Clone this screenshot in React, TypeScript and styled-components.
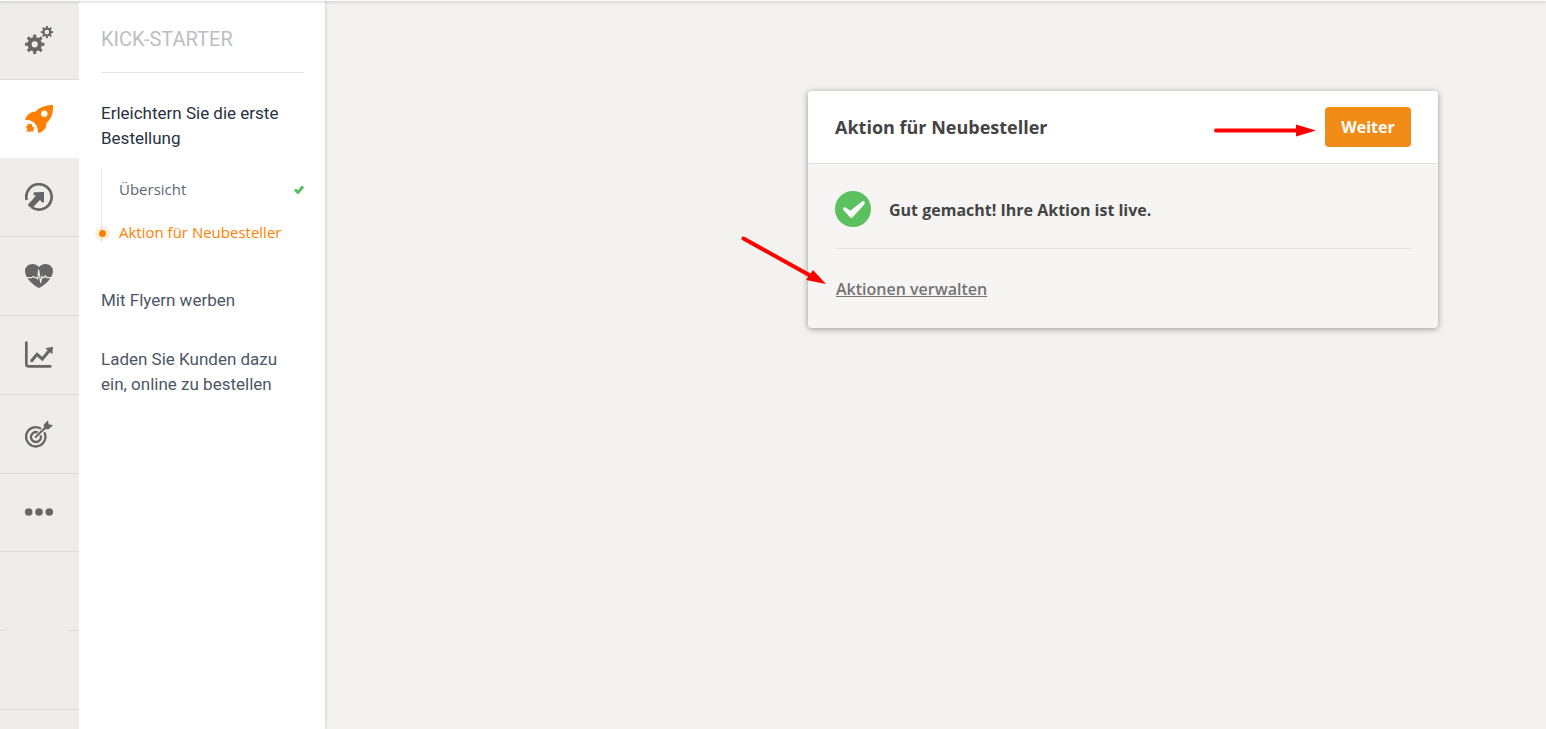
import React from 'react';
import styled, { createGlobalStyle } from 'styled-components';

const GlobalStyle = createGlobalStyle`
  * { box-sizing: border-box; }
  body { margin: 0; background: #f4f2ee; font-family: 'Open Sans', sans-serif; }
  h1, h2, p, ul { margin: 0; padding: 0; font-weight: 400; }
  ul { list-style: none; }
`;

const Page = styled.div`
  display: flex;
  min-height: 100vh;
`;

const TopEdge = styled.div`
  position: fixed;
  inset: 0 0 auto;
  height: 1px;
  background: #fdfdfd;
  box-shadow: 0 1px 3px rgba(0, 0, 0, 0.3);
  z-index: 5;
`;

const Rail = styled.nav`
  position: relative;
  z-index: 1;
  width: 79px;
  flex: none;
  height: 100vh;
  overflow: hidden;
  background: #efede9;
`;

const RailButton = styled.button<{ $active?: boolean }>`
  display: flex;
  align-items: center;
  justify-content: center;
  width: 100%;
  height: 79px;
  padding: 0 1px 0 0;
  border: 0;
  border-bottom: 1px solid ${p => (p.$active ? '#f1f0ee' : '#dddbd7')};
  background: ${p => (p.$active ? '#ffffff' : 'transparent')};
  color: ${p => (p.$active ? '#ff8000' : '#666666')};
  cursor: pointer;

  &:first-of-type { height: 80px; padding-top: 1px; }
  &:nth-of-type(3), &:last-of-type { height: 78px; padding-bottom: 1px; }
`;

const RailSpacer = styled.div<{ $split?: boolean }>`
  height: 79px;
  background: ${p => p.$split
    ? 'linear-gradient(to right, #dddbd7 6px, transparent 6px calc(100% - 10px), #dddbd7 calc(100% - 10px))'
    : 'linear-gradient(#dddbd7, #dddbd7)'} bottom / 100% 1px no-repeat;
`;

const Panel = styled.aside`
  width: 246px;
  flex: none;
  padding: 24px 21px 24px 22px;
  background: #ffffff;
  box-shadow: 1px 0 3px rgba(0, 0, 0, 0.13);
  font-family: Roboto, sans-serif;
`;

const PanelTitle = styled.h1`
  padding-bottom: 18px;
  border-bottom: 1px solid #e3e3e3;
  font-size: 20px;
  line-height: 30px;
  color: #bbbec3;
`;

const Steps = styled.ul`
  padding-top: 28px;
`;

const Step = styled.li`
  margin-bottom: 34px;
`;

const StepLink = styled.a<{ $current?: boolean }>`
  display: block;
  font-size: 17px;
  line-height: 25px;
  color: ${p => (p.$current ? '#273142' : '#4c5667')};
  text-decoration: none;
`;

const SubSteps = styled.ul`
  margin: 17px 0 45px;
  border-left: 1px solid #e8e8e8;
  font-family: 'Open Sans', sans-serif;
`;

const SubStep = styled.li`
  position: relative;
  display: flex;
  align-items: center;
  justify-content: space-between;
  height: 43px;
  padding-left: 17px;

  &:last-child { height: 32px; align-items: flex-start; }
`;

const SubLink = styled.a<{ $active?: boolean }>`
  font-size: 15px;
  line-height: 43px;
  color: ${p => (p.$active ? '#ff8000' : '#5c6573')};
  text-decoration: none;
`;

const Marker = styled.span`
  position: absolute;
  left: -3px;
  top: 19px;
  width: 7px;
  height: 7px;
  border-radius: 50%;
  background: #ff8000;
  box-shadow: 0 0 0 4px rgba(255, 128, 0, 0.12);
`;

const Main = styled.main`
  flex: 1;
  display: flex;
  justify-content: flex-end;
  align-items: flex-start;
  padding: 91px 108px 40px 24px;
`;

const Card = styled.section`
  position: relative;
  width: 100%;
  max-width: 630px;
  border-radius: 4px;
  background: #f7f5f4;
  box-shadow: 0 1px 6px rgba(0, 0, 0, 0.38);
  color: #444444;
`;

const CardHeader = styled.header`
  display: flex;
  align-items: center;
  justify-content: space-between;
  padding: 16px 27px;
  border-bottom: 1px solid #dedede;
  border-radius: 4px 4px 0 0;
  background: #ffffff;
`;

const CardTitle = styled.h2`
  font-size: 18px;
  line-height: 24px;
  font-weight: 700;
`;

const NextButton = styled.button`
  height: 40px;
  width: 86px;
  padding: 0;
  border: 0;
  border-radius: 4px;
  background: #f18c19;
  color: #ffffff;
  font: 700 16px/24px 'Open Sans', sans-serif;
  cursor: pointer;
`;

const CardBody = styled.div`
  padding: 27px;
`;

const Status = styled.div`
  display: flex;
  align-items: center;
  gap: 18px;
  padding-bottom: 21px;
  border-bottom: 1px solid #e3e2e1;
`;

const StatusText = styled.p`
  padding-top: 2px;
  font-size: 16px;
  line-height: 24px;
  font-weight: 700;
`;

const ManageLink = styled.a`
  display: inline-block;
  margin: 28px 1px 0;
  font-size: 16px;
  line-height: 24px;
  font-weight: 600;
  color: #737373;
`;

const NextPointer = styled.svg`
  position: absolute;
  top: 31px;
  right: 122px;
`;

const ManagePointer = styled.svg`
  position: absolute;
  top: 142px;
  left: -69px;
`;

const Gear = ({ x, y, r, hole }: { x: number; y: number; r: number; hole: number }) => {
  const body = r * 0.74;
  return (
    <g transform={`translate(${x} ${y})`} stroke="currentColor" fill="none">
      <circle r={(body + hole) / 2} strokeWidth={body - hole} />
      {[0, 45, 90, 135, 180, 225, 270, 315].map(a => (
        <path key={a} d={`M0 ${-body + 0.6}V${-r}`} strokeWidth={r * 0.32} transform={`rotate(${a})`} />
      ))}
    </g>
  );
};

const Icon = ({ size = 84, children }: { size?: number; children: React.ReactNode }) => (
  <svg width="28" height="28" viewBox={`0 0 ${size} ${size}`} fill="currentColor" aria-hidden="true">
    {children}
  </svg>
);

const GearsIcon = () => (
  <Icon size={28}>
    <Gear x={9.7} y={18.3} r={9.7} hole={3.1} />
    <Gear x={21.9} y={6.1} r={6.1} hole={2.3} />
  </Icon>
);

const RocketIcon = () => (
  <Icon>
    <path fillRule="evenodd" d="M84 0C62 0 42 7 31 20C19 20 7 25 0 45C8 44 16 45 19 48C27 51 36 60 37 69C38 72 39 77 39 84C54 81 65 72 64 55C79 43 86 22 84 0ZM58 16.500a9.500 9.500 0 1 1 0 19a9.500 9.500 0 1 1 0-19Z" />
    <path d="M8 55L14 58L20 57L22 65L29 68L25 73L27 80L19 78L15 82L12 79L4 81L7 73L2 63L8 62Z" strokeLinejoin="round" />
  </Icon>
);

const ArrowCircleIcon = () => (
  <Icon>
    <path d="M5 51A38 38 0 1 1 19 72" fill="none" stroke="currentColor" strokeWidth="8" />
    <path d="M57 27V58Q52 60 48 55L45 51L22 75Q14 73 8 66L32 39L26 35Q23 31 28 28Z" />
  </Icon>
);

const HeartIcon = () => (
  <Icon>
    <path d="M42 78C27 70 0 50 0 26C0 8 27-3 42 15C57-3 84 8 84 26C84 50 57 70 42 78Z" />
    <path d="M5 47H20L25 43L29 47H35L38 51L41 24L47 62L51 43L54 47H57L61 41L65 47H79" fill="none" stroke="#efede9" strokeWidth="3.500" strokeLinejoin="round" />
  </Icon>
);

const ChartIcon = () => (
  <Icon>
    <path d="M4 5V70Q4 76 10 76H76" fill="none" stroke="currentColor" strokeWidth="8" strokeLinecap="round" />
    <path d="M20 59L36 40L52 54L72 30" fill="none" stroke="currentColor" strokeWidth="9" strokeLinecap="round" />
    <path d="M84 17L82 40L61 22Z" />
  </Icon>
);

const TargetIcon = () => (
  <Icon>
    <path d="M48 26A29 29 0 1 0 58 37" fill="none" stroke="currentColor" strokeWidth="7" />
    <path d="M38 37A15 15 0 1 0 47 46" fill="none" stroke="currentColor" strokeWidth="7" />
    <path d="M32 51L66 18" fill="none" stroke="currentColor" strokeWidth="6" strokeLinecap="round" />
    <path d="M56 14L69 1L71 13L84 16L71 28H58Z" />
  </Icon>
);

const DotsIcon = () => (
  <Icon>
    <circle cx="11" cy="42" r="11.500" />
    <circle cx="42" cy="42" r="11.500" />
    <circle cx="73" cy="42" r="11.500" />
  </Icon>
);

const railItems = [
  { label: 'Einstellungen', icon: <GearsIcon /> },
  { label: 'Kick-Starter', icon: <RocketIcon />, active: true },
  { label: 'Weiterleitung', icon: <ArrowCircleIcon /> },
  { label: 'Status', icon: <HeartIcon /> },
  { label: 'Berichte', icon: <ChartIcon /> },
  { label: 'Marketing', icon: <TargetIcon /> },
  { label: 'Mehr', icon: <DotsIcon /> },
];

export default function App() {
  return (
    <>
      <GlobalStyle />
      <TopEdge />
      <Page>
        <Rail>
          {railItems.map(item => (
            <RailButton key={item.label} type="button" aria-label={item.label} $active={item.active}>
              {item.icon}
            </RailButton>
          ))}
          <RailSpacer $split />
          <RailSpacer />
        </Rail>
        <Panel>
          <PanelTitle>KICK-STARTER</PanelTitle>
          <Steps>
            <Step>
              <StepLink href="#bestellung" $current>Erleichtern Sie die erste Bestellung</StepLink>
              <SubSteps>
                <SubStep>
                  <SubLink href="#uebersicht">Übersicht</SubLink>
                  <svg width="10" height="9" viewBox="0 0 10 9" aria-hidden="true">
                    <path d="M1 4.500L4 7.500L9 1.500" fill="none" stroke="#4fbf58" strokeWidth="2.800" />
                  </svg>
                </SubStep>
                <SubStep>
                  <Marker />
                  <SubLink href="#aktion" $active>Aktion für Neubesteller</SubLink>
                </SubStep>
              </SubSteps>
            </Step>
            <Step>
              <StepLink href="#flyer">Mit Flyern werben</StepLink>
            </Step>
            <Step>
              <StepLink href="#kunden">Laden Sie Kunden dazu ein, online zu bestellen</StepLink>
            </Step>
          </Steps>
        </Panel>
        <Main>
          <Card>
            <CardHeader>
              <CardTitle>Aktion für Neubesteller</CardTitle>
              <NextButton type="button">Weiter</NextButton>
            </CardHeader>
            <CardBody>
              <Status>
                <svg width="36" height="36" viewBox="0 0 108 108" aria-hidden="true">
                  <circle cx="54" cy="54" r="54" fill="#5bc15f" />
                  <path d="M24 52Q28 46 33 50L46 59L80 32Q86 27 89 34Q90 38 87 41L53 79Q49 83 45 79L26 58Q23 55 24 52Z" fill="#ffffff" />
                </svg>
                <StatusText>Gut gemacht! Ihre Aktion ist live.</StatusText>
              </Status>
              <ManageLink href="#aktionen">Aktionen verwalten</ManageLink>
            </CardBody>
            <NextPointer width="104" height="16" viewBox="0 0 104 16" aria-hidden="true">
              <path d="M4 8.500H86" stroke="#ff0000" strokeWidth="4" strokeLinecap="round" />
              <path d="M84 2.500L104 8.500L84 14.500Z" fill="#ff0000" />
            </NextPointer>
            <ManagePointer width="90" height="56" viewBox="0 0 90 56" aria-hidden="true">
              <path d="M4.500 5.500L72 43" stroke="#ff0000" strokeWidth="4" strokeLinecap="round" />
              <path d="M74 37L87 51L67 47Z" fill="#ff0000" />
            </ManagePointer>
          </Card>
        </Main>
      </Page>
    </>
  );
}
